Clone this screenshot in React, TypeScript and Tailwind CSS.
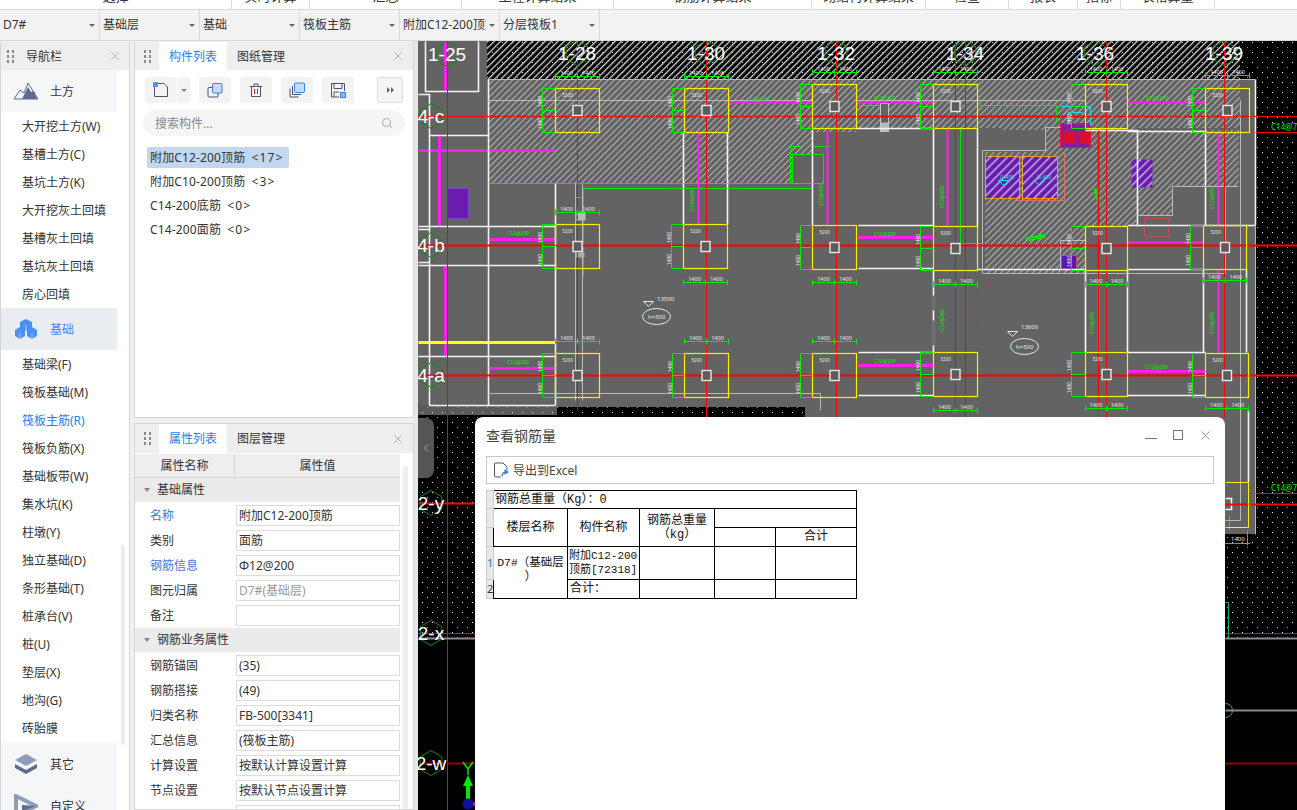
import { X, ChevronLeft, Search } from 'lucide-react';

const FONT = '[font-family:"Noto_Sans","Noto_Sans_CJK_SC",sans-serif]';

const topTabs = [
    { label: '选择', w: 'w-[232px]' },
    { label: '实时计算', w: 'w-[78px]' },
    { label: '汇总', w: 'w-[152px]' },
    { label: '工程计算结果', w: 'w-[152px]' },
    { label: '钢筋计算结果', w: 'w-[198px]' },
    { label: '砌结构计算结果', w: 'w-[114px]' },
    { label: '检查', w: 'w-[83px]' },
    { label: '报表', w: 'w-[69px]' },
    { label: '指标', w: 'w-[43px]' },
    { label: '表格算量', w: 'w-[94px]' },
];

const selectors = ['D7#', '基础层', '基础', '筏板主筋', '附加C12-200顶筋', '分层筏板1'];

const earthItems = ['大开挖土方(W)', '基槽土方(C)', '基坑土方(K)', '大开挖灰土回填', '基槽灰土回填', '基坑灰土回填', '房心回填'];
const baseItems = ['基础梁(F)', '筏板基础(M)', '筏板主筋(R)', '筏板负筋(X)', '基础板带(W)', '集水坑(K)', '柱墩(Y)', '独立基础(D)', '条形基础(T)', '桩承台(V)', '桩(U)', '垫层(X)', '地沟(G)', '砖胎膜'];

const components = [
    { label: '附加C12-200顶筋', count: '<17>', active: true },
    { label: '附加C10-200顶筋', count: '<3>' },
    { label: 'C14-200底筋', count: '<0>' },
    { label: 'C14-200面筋', count: '<0>' },
];

const baseProps = [
    { name: '名称', value: '附加C12-200顶筋', blue: true },
    { name: '类别', value: '面筋' },
    { name: '钢筋信息', value: 'Φ12@200', blue: true },
    { name: '图元归属', value: 'D7#(基础层)', muted: true },
    { name: '备注', value: '' },
];
const rebarProps = [
    { name: '钢筋锚固', value: '(35)' },
    { name: '钢筋搭接', value: '(49)' },
    { name: '归类名称', value: 'FB-500[3341]' },
    { name: '汇总信息', value: '(筏板主筋)' },
    { name: '计算设置', value: '按默认计算设置计算' },
    { name: '节点设置', value: '按默认节点设置计算' },
    { name: '搭接设置', value: '按默认搭接设置计算' },
];

// 桩承台: x, y, w, 标注线 y, 左侧标注线 x
const caps = [
    [555, 88, 44, 76, 542], [684, 88, 44, 76, 672], [812, 84, 44, 72, 800], [933, 84, 44, 72, 920], [1085, 84, 42, 72, 1071], [1205, 88, 44, 75, 1192],
    [555, 224, 44, 212, 542], [683, 224, 44, 282, 671], [812, 225, 44, 282, 800], [933, 226, 44, 284, 920], [1085, 226, 42, 284, 1071], [1203, 225, 43, 280, 1190],
    [555, 353, 44, 341, 542], [684, 353, 44, 341, 672], [812, 353, 44, 341, 800], [933, 352, 44, 410, 920], [1085, 352, 42, 408, 1071], [1205, 353, 43, 408, 1192],
];

const whiteLines = [
    'M425 41V91H478V41', 'M429 135V405', 'M429 135H488', 'M488 79V405', 'M555 183V405', 'M418 226H555', 'M418 265H555', 'M418 356H555', 'M429 405H555',
    'M418 94H429V135', 'M418 229H429', 'M418 262H429', 'M683 132V224', 'M727 132V224', 'M812 130V225', 'M933 128V226', 'M977 128V226', 'M856 128H933',
    'M858 225H933', 'M858 268H933', 'M858 352H933', 'M858 395H933', 'M933 270V352', 'M1085 268V352', 'M1127 268V352', 'M1085 130H1137V226',
    'M1127 225H1255', 'M1255 79V225', 'M977 269H1085', 'M1127 352H1205', 'M1127 395H1205', 'M1203 268V352', 'M1246 268V352', 'M1127 131H1205', 'M1205 131V225',
    'M1127 269H1203', 'M1248 410V482', 'M1225 498H1231V509H1225',
];
const grayLines = [
    'M488 79H1255', 'M488 100H812', 'M575 183V400', 'M582 183V400', 'M488 393H820V410', 'M982 273V150H1045V127H1060', 'M982 273H1225', 'M1238 186H1172V215H1137',
    'M1255 225V534', 'M1240 100V520H1225', 'M1225 186V273', 'M856 100H1085', 'M1060 240H1085', 'M1060 240V270',
];
const greenLines = [
    'M488 183H790V146H800', 'M583 188H812V146H830', 'M575 197V276', 'M583 188V276', 'M575 197H583', 'M977 105H1056V122', 'M960 128V243H982', 'M858 105H880',
    'M1229 515V530', 'M1225 543H1250M1247 530V545',
];
const magentaBars = [
    ['M445 41V91', 3], ['M418 150H555', 2.5], ['M439 135V226', 3], ['M445 265V356', 3], ['M488 239H555', 3], ['M488 368H555', 3], ['M698 132V224', 2], ['M827 130V224', 2],
    ['M728 102H812', 2], ['M858 102H933', 2], ['M1127 102H1205', 2], ['M858 237H933', 3], ['M858 365H933', 3], ['M947 128V226', 2], ['M1218 131V225', 2], ['M1218 268V352', 2],
    ['M1098 268V352', 3], ['M1127 371H1205', 3], ['M1127 242H1203', 2],
] as const;
const redLines = [
    ['M447 41V810', 1], ['M706 41V417', 1], ['M836 41V417', 1], ['M955 41V417', 1], ['M965 41V417', 1], ['M1106 41V417', 1], ['M1098 130V410', 1.5], ['M1224 41V417', 1],
    ['M577 225V410', 1], ['M418 116H488', 1], ['M812 116H1085', 2], ['M1255 116H1297', 1], ['M418 245H1297', 2], ['M418 375H1297', 2], ['M1255 132H1297', 1], ['M1255 493H1297', 1],
    ['M1225 504H1297', 2], ['M418 503H475', 2], ['M418 633H475', 1], ['M1225 633H1297', 1],
] as const;
const rebarLabels = [
    [694, 200], [823, 195], [944, 197], [1094, 323], [1214, 198], [1214, 323], [944, 320],
];
const gridLabels = [
    { t: '1-25', x: 447, y: 54 }, { t: '1-28', x: 577, y: 53 }, { t: '1-30', x: 706, y: 53 }, { t: '1-32', x: 836, y: 53 },
    { t: '1-34', x: 965, y: 53 }, { t: '1-36', x: 1095, y: 53 }, { t: '1-39', x: 1224, y: 53 },
    { t: '4-c', x: 431, y: 116 }, { t: '4-b', x: 431, y: 245 }, { t: '4-a', x: 431, y: 375 },
    { t: '2-y', x: 431, y: 503 }, { t: '2-x', x: 431, y: 633 }, { t: '2-w', x: 431, y: 763 },
];

function hexPoints(cx: number, cy: number, r: number) {
    return [0, 1, 2, 3, 4, 5].map((i) => {
        const a = (Math.PI / 3) * i + Math.PI / 6;
        return `${cx + r * Math.cos(a)},${cy + r * Math.sin(a)}`;
    }).join(' ');
}

function Cap({ x, y, w, dimY, dimX }: { x: number; y: number; w: number; dimY: number; dimX: number }) {
    const mid = x + w / 2;
    const midY = y + 22;
    return (
        <g>
            <rect x={x} y={y} width={w} height={44} fill="none" stroke="#ffee00" strokeWidth="1.2" />
            <rect x={mid - 4.5} y={midY - 5} width={9} height={10} fill="#5c5c5c" stroke="#e8e8e8" strokeWidth="1.4" />
            <path d={`M${x} ${dimY}H${x + w}M${x} ${dimY - 3}V${dimY + 3}M${mid} ${dimY - 3}V${dimY + 3}M${x + w} ${dimY - 3}V${dimY + 3}`} stroke="#00e800" strokeWidth="1" fill="none" />
            <path d={`M${dimX} ${y}V${y + 44}M${dimX} ${y}H${x}M${dimX} ${midY}H${x}M${dimX} ${y + 44}H${x}`} stroke="#00e800" strokeWidth="1" fill="none" />
            <text x={x + w / 4} y={dimY - 2} fontSize="5.5" fill="#e8e8e8" textAnchor="middle">1400</text>
            <text x={x + (3 * w) / 4} y={dimY - 2} fontSize="5.5" fill="#e8e8e8" textAnchor="middle">1400</text>
            <text x={x + 7} y={y + 8} fontSize="4.5" fill="#e8e8e8">5200</text>
            <text fontSize="5" fill="#e8e8e8" textAnchor="middle" transform={`translate(${dimX - 1} ${y + 13}) rotate(-90)`}>1400</text>
            <text fontSize="5" fill="#e8e8e8" textAnchor="middle" transform={`translate(${dimX - 1} ${y + 35}) rotate(-90)`}>1400</text>
        </g>
    );
}

function CadDrawing() {
    return (
        <svg viewBox="418 41 879 769" className="block w-[879px] h-[769px]">
            <defs>
                <pattern id="dots" width="10" height="10" patternUnits="userSpaceOnUse">
                    <rect x="2" y="2" width="1" height="1" fill="#f0f0f0" />
                    <rect x="7" y="7" width="1" height="1" fill="#999" />
                </pattern>
                <pattern id="hatchTop" width="4.5" height="4.5" patternUnits="userSpaceOnUse" patternTransform="rotate(45)">
                    <rect width="1.3" height="4.5" fill="#d0d0d0" />
                </pattern>
                <pattern id="hatchGray" width="4.5" height="4.5" patternUnits="userSpaceOnUse" patternTransform="rotate(45)">
                    <rect width="1" height="4.5" fill="#b4b4b4" />
                </pattern>
                <pattern id="hatchPurple" width="6" height="6" patternUnits="userSpaceOnUse" patternTransform="rotate(45)">
                    <rect width="1.4" height="6" fill="#c8b8e0" />
                </pattern>
            </defs>

            <rect x="418" y="41" width="879" height="769" fill="#000" />
            <rect x="418" y="41" width="879" height="597" fill="url(#dots)" />
            <path d="M418 41H487V79H1255V534H805V407H557V405H418Z" fill="#636363" />
            <rect x="418" y="405" width="139" height="10" fill="#5a5a5a" />
            <rect x="418" y="405" width="139" height="10" fill="url(#dots)" />
            <rect x="487" y="41" width="753" height="38" fill="url(#hatchTop)" />

            {/* 填充区域 */}
            <path d="M488 79H1240V128H1137V226H1085V130H1000V128H856V132H812V183H488Z" fill="url(#hatchGray)" />
            <path d="M985 152H1045V130H1085V273H985Z" fill="url(#hatchGray)" />
            <path d="M1137 130H1239V186H1172V215H1137Z" fill="url(#hatchGray)" />

            <g transform="translate(0.5 0.5)">
                <path d={greenLines.join('')} stroke="#00e800" fill="none" />
                <rect x="792" y="154" width="31" height="29" fill="#636363" stroke="#00e800" />
                <rect x="576" y="211" width="9" height="9" fill="#bbbbbb" />
                <rect x="575" y="252" width="9" height="5" fill="#aaaaaa" />
                <rect x="880" y="103" width="8" height="28" fill="#636363" stroke="#c8c8c8" />
                <rect x="880" y="122" width="8" height="9" fill="#bbbbbb" />

                {/* 紫色区块 */}
                <rect x="447" y="188" width="21" height="30" fill="#6a1cb0" stroke="#7a4ac0" />
                <rect x="985" y="156" width="34" height="42" fill="#6a1cb0" />
                <rect x="985" y="156" width="34" height="42" fill="url(#hatchPurple)" stroke="#f0a020" />
                <rect x="1022" y="156" width="35" height="42" fill="#6a1cb0" />
                <rect x="1022" y="156" width="35" height="42" fill="url(#hatchPurple)" stroke="#f0a020" />
                <rect x="1131" y="159" width="21" height="28" fill="#6a1cb0" />
                <rect x="1131" y="159" width="21" height="28" fill="url(#hatchPurple)" />
                <rect x="1060" y="123" width="30" height="24" fill="#8a1ca0" stroke="#f01030" />
                <rect x="1062" y="131" width="13" height="12" fill="#d81030" />
                <rect x="1078" y="131" width="11" height="12" fill="#d81030" />
                <rect x="1061" y="255" width="15" height="14" fill="#5a18b0" stroke="#c05050" />
                <path d="M1060 106H1090V125M1068 112H1082M1068 112V122" stroke="#20e0e0" fill="none" />
                <path d="M998 180l5 5 5-5zM1034 180l5 5 5-5" stroke="#20e0e0" fill="none" />
                <path d="M1064 150V200H1015" stroke="#e07060" fill="none" />
                <rect x="1144" y="218" width="24" height="18" fill="none" stroke="#c05050" />
                <path d="M1094 188L1099 207M1096 188L1099 200M1025 238L1045 234M1028 240L1045 236" stroke="#00e800" strokeWidth="2" fill="none" />

                {magentaBars.map(([d, w]) => <path key={d} d={d} stroke="#ff20f0" strokeWidth={w} fill="none" />)}
                <path d="M418 342H555" stroke="#ffff20" strokeWidth="3" />

                <path d={whiteLines.join('')} stroke="#f4f4f4" strokeWidth="1.6" fill="none" />
                <path d={grayLines.join('')} stroke="#b8b8b8" strokeWidth="1" fill="none" />
                <path d="M933 295V310M933 320V345M977 285V300M977 315V330" stroke="#636363" strokeWidth="2" fill="none" />

                {redLines.map(([d, w]) => <path key={d} d={d} stroke="#ff0000" strokeWidth={w} fill="none" />)}
                <path d="M577 41V225" stroke="#ff0000" strokeDasharray="10 2" fill="none" />
                <path d="M488 116H812M1085 116H1255" stroke="#ff0000" strokeWidth="1.5" strokeDasharray="12 2" fill="none" />
                <path d="M418 763H475M1225 763H1297" stroke="#8a0808" strokeWidth="2" />
                <path d="M1225 638H1297M418 638H475M1225 710H1297" stroke="#8a8a8a" strokeWidth="2" />
                <path d="M1225 602H1228V638" stroke="#14b070" fill="none" />
                <path d="M1225 703a7 7 0 0 1 0 14" stroke="#40a090" fill="none" />
                <path d="M1225 482H1248V527H1225" stroke="#ffee00" fill="none" />

                {caps.map(([x, y, w, dimY, dimX]) => <Cap key={`${x}-${y}`} x={x} y={y} w={w} dimY={dimY} dimX={dimX} />)}

                {/* 板厚标注 */}
                <g fill="none" stroke="#e8e8e8">
                    <path d="M643 301H653L648 306Z" />
                    <ellipse cx="656" cy="316" rx="14" ry="8" />
                    <path d="M1007 331H1017L1012 336Z" />
                    <ellipse cx="1024" cy="346" rx="14" ry="8" />
                </g>
            </g>

            {/* 配筋文字 */}
            <g fill="#00f000" fontSize="5">
                <text x="507" y="235">C12@200</text>
                <text x="507" y="364">C12@200</text>
                <text x="747" y="101">C12@200</text>
                <text x="874" y="100">C12@200</text>
                <text x="874" y="236">C12@200</text>
                <text x="874" y="363">C12@200</text>
                <text x="1146" y="100">C12@200</text>
                <text x="1146" y="369">C12@200</text>
                <text x="1271" y="130" fontSize="8">C14@750</text>
                <text x="1271" y="491" fontSize="8">C14@750</text>
                {rebarLabels.map(([x, y]) => (
                    <text key={`${x}-${y}`} textAnchor="middle" transform={`translate(${x} ${y}) rotate(-90)`}>C12@200</text>
                ))}
            </g>
            <g fill="#20e0e0" fontSize="5">
                <text x="1000" y="179">J2.400</text>
                <text x="1037" y="179">J2.400</text>
            </g>
            <g fill="#e8e8e8" fontSize="6">
                <text x="648" y="319">h=500</text>
                <text x="1016" y="349">h=500</text>
                <text x="657" y="301">13500</text>
                <text x="1021" y="329">13600</text>
                <text x="1231" y="541">1400</text>
            </g>

            {gridLabels.map((g) => (
                <g key={g.t}>
                    <polygon points={hexPoints(g.x, g.y, 12.5)} fill="none" stroke="#0f8a0f" strokeWidth="1" />
                    <text x={g.x} y={g.y + 7} fontSize="19" fill="#ffffff" textAnchor="middle" className="[font-family:'Liberation_Sans',sans-serif]">{g.t}</text>
                </g>
            ))}

            {/* 坐标轴 */}
            <path d="M468 800V785" stroke="#00e800" strokeWidth="4" />
            <path d="M463 786L468 775L473 786Z" fill="#00e800" />
            <path d="M463 762L468 769L473 762M468 769V775" stroke="#00e800" strokeWidth="1.5" fill="none" />
            <circle cx="468" cy="804" r="5.5" fill="#10109a" />
            <rect x="473" y="802" width="2" height="4" fill="#c01060" />
        </svg>
    );
}

function Grip() {
    return (
        <div className="grid grid-cols-2 gap-x-[3px] gap-y-[2px] w-[7px]">
            {[0, 1, 2, 3, 4, 5].map((i) => <span key={i} className="w-[2px] h-[3px] bg-[#8a8a8a]" />)}
        </div>
    );
}

function TabHeader({ first, second, height }: { first: string; second: string; height: string }) {
    return (
        <div className={`${height} bg-[#eeeeef] flex items-center shrink-0`}>
            <div className="w-[24px] flex justify-center pl-[1px]"><Grip /></div>
            <div className="w-[68px] h-full bg-white flex items-center justify-center pt-[1px] text-[#1f7fe8]">{first}</div>
            <div className="ml-[10px] pt-[1px] text-[#333]">{second}</div>
            <X className="ml-auto mr-[8px] w-[14px] h-[14px] text-[#a8a8a8]" strokeWidth={1.4} />
        </div>
    );
}

function NavHeader({ label, active, bg, children }: { label: string; active?: boolean; bg: string; children: React.ReactNode }) {
    return (
        <div className={`w-[116px] h-[42px] flex items-center ${bg}`}>
            <div className="w-[49px] flex justify-center">{children}</div>
            <span className={`pt-[1px] ${active ? 'text-[#4a86e8]' : 'text-[#333]'}`}>{label}</span>
        </div>
    );
}

function NavItem({ label, active }: { label: string; active?: boolean }) {
    return <div className={`h-[28px] pl-[21px] flex items-center whitespace-nowrap ${active ? 'text-[#1f7fe8]' : 'text-[#333]'}`}>{label}</div>;
}

function Sidebar() {
    return (
        <div className="relative mt-[1px] w-[130px] shrink-0 bg-white border-l border-r border-[#d6d6d6] overflow-hidden">
            <div className="h-[28px] bg-[#eeeeef] flex items-center pl-[6px] pr-[7px]">
                <Grip />
                <span className="ml-[12px] pt-[1px] text-[#333]">导航栏</span>
                <X className="ml-auto w-[14px] h-[14px] text-[#a8a8a8]" strokeWidth={1.4} />
            </div>
            <NavHeader label="土方" bg="bg-[#f5f6f8]">
                <svg width="26" height="18" viewBox="0 0 26 18">
                    <path d="M1 17L7 8L11 11L15 1L25 17Z" fill="none" stroke="#5b6b8c" strokeWidth="1" />
                    <path d="M9 17L15 5L18 10L21 9L24 17Z" fill="#5b6b8c" />
                </svg>
            </NavHeader>
            <div className="relative top-[1px] h-[196px]">
                {earthItems.map((l) => <NavItem key={l} label={l} />)}
            </div>
            <NavHeader label="基础" active bg="bg-[#e9ecf1]">
                <svg width="24" height="22" viewBox="0 0 24 22">
                    <path d="M12 1L18 4V10L12 13L6 10V4Z" fill="#4a90f0" />
                    <path d="M6 9L11 12V18L6 21L1 18V12Z" fill="#4a90f0" />
                    <path d="M18 9L23 12V18L18 21L13 18V12Z" fill="#4a90f0" />
                    <path d="M6 15V21M18 15V21M12 7V13" stroke="#a8ccf8" strokeWidth="1" />
                </svg>
            </NavHeader>
            <div className="pt-[1px]">
                {baseItems.map((l) => <NavItem key={l} label={l} active={l === '筏板主筋(R)'} />)}
            </div>
            <NavHeader label="其它" bg="bg-[#f5f6f8]">
                <svg width="24" height="22" viewBox="0 0 24 22">
                    <path d="M12 1L23 7L12 13L1 7Z" fill="#8f9db8" />
                    <path d="M1 11L12 17L23 11V15L12 21L1 15Z" fill="#5b6b8c" />
                </svg>
            </NavHeader>
            <NavHeader label="自定义" bg="bg-[#f5f6f8]">
                <svg width="24" height="24" viewBox="0 0 24 24">
                    <path d="M2 2L22 12L2 22Z" fill="none" stroke="#8f9db8" strokeWidth="4" />
                    <path d="M8 11L22 12L8 17Z" fill="#5b6b8c" />
                </svg>
            </NavHeader>
            <div className="absolute left-[120px] top-[503px] w-[4px] h-[200px] rounded bg-[#ececec]" />
        </div>
    );
}

function ToolBtn({ children, w = 'w-[32px]' }: { children: React.ReactNode; w?: string }) {
    return <div className={`${w} h-[26px] rounded-[3px] bg-[#f3f3f3] flex items-center justify-center`}>{children}</div>;
}

function ComponentList() {
    return (
        <div className="h-[376px] bg-white border border-[#d6d6d6] border-t-0 flex flex-col shrink-0">
            <TabHeader first="构件列表" second="图纸管理" height="h-[28px]" />
            <div className="flex items-center h-[26px] mt-[7px] pl-[10px]">
                <ToolBtn>
                    <svg width="16" height="16" viewBox="0 0 16 16" fill="none">
                        <path d="M1.500 5V14.500H14.500V5L11 1.500H5" stroke="#4a5570" />
                        <rect x="0" y="0" width="5" height="5" fill="#5a90e0" />
                    </svg>
                </ToolBtn>
                <div className="ml-[1px] w-[12px] h-[26px] bg-[#f3f3f3] rounded-r-[3px] flex items-center justify-center">
                    <span className="border-x-[3px] border-x-transparent border-t-[3px] border-t-[#888]" />
                </div>
                <div className="ml-[9px]"><ToolBtn>
                    <svg width="16" height="16" viewBox="0 0 16 16" fill="none">
                        <rect x="5.500" y="1.500" width="9.500" height="9.500" rx="1" fill="#c6dcf8" stroke="#3a7fe0" />
                        <path d="M5 5.500H2A1 1 0 0 0 1 6.500V14A1 1 0 0 0 2 15H10A1 1 0 0 0 11 14V11" stroke="#4a5570" />
                    </svg>
                </ToolBtn></div>
                <div className="ml-[9px]"><ToolBtn>
                    <svg width="16" height="16" viewBox="0 0 16 16" fill="none">
                        <path d="M2 4.500H14M3.500 4.500V14.500H12.500V4.500M6 4.500V2H10V4.500" stroke="#4a5570" />
                        <path d="M6.500 7V12M9.500 7V12" stroke="#e02020" />
                    </svg>
                </ToolBtn></div>
                <div className="ml-[9px]"><ToolBtn>
                    <svg width="16" height="16" viewBox="0 0 16 16" fill="none">
                        <rect x="5.500" y="1" width="10" height="9.500" rx="1" fill="#c6dcf8" stroke="#3a7fe0" />
                        <path d="M3.500 4V12.500H12M1 6.500V15H9.500" stroke="#4a5570" />
                    </svg>
                </ToolBtn></div>
                <div className="ml-[9px]"><ToolBtn>
                    <svg width="16" height="16" viewBox="0 0 16 16" fill="none">
                        <path d="M9 15H1.500V1.500H14.500V9M4 1.500V6.500H12V1.500M4 15V10H9" stroke="#4a5570" />
                        <rect x="10.500" y="10.500" width="5" height="5" fill="#8ab8f0" stroke="#3a7fe0" />
                    </svg>
                </ToolBtn></div>
                <div className="ml-[23px] w-[26px] h-[26px] rounded-[3px] bg-[#f5f5f5] border border-[#dcdcdc] flex items-center justify-center gap-[1px]">
                    <span className="border-y-[3px] border-y-transparent border-l-[3px] border-l-[#666]" />
                    <span className="border-y-[3px] border-y-transparent border-l-[3px] border-l-[#666]" />
                </div>
            </div>
            <div className="mt-[7px] mx-[8px] h-[26px] rounded-full bg-[#f5f5f5] flex items-center pl-[12px] pr-[12px] text-[#8a8a8a]">
                <span className="pt-[1px]">搜索构件...</span>
                <Search className="ml-auto w-[12px] h-[12px] text-[#a8a8a8]" strokeWidth={2} />
            </div>
            <div className="mt-[11px] pl-[12px] flex flex-col gap-[3px] items-start">
                {components.map((c) => (
                    <div key={c.label} className={`h-[21px] pl-[3px] pr-[5px] flex items-center rounded-[2px] text-[#333] ${c.active ? 'bg-[#c1d8f0]' : ''}`}>
                        <span className="tracking-[0.15px]">{c.label}</span>
                        <span className="ml-[6px] tracking-[1.2px]">{c.count}</span>
                    </div>
                ))}
            </div>
        </div>
    );
}

function PropRow({ name, value, blue, muted }: { name: string; value: string; blue?: boolean; muted?: boolean }) {
    return (
        <div className="h-[25px] flex items-center shrink-0">
            <div className={`w-[101px] pl-[15px] ${blue ? 'text-[#3c78dc]' : 'text-[#333]'}`}>{name}</div>
            <div className={`w-[164px] h-[21px] border border-[#dcdcdc] flex items-center pl-[2px] whitespace-nowrap ${muted ? 'text-[#9a9a9a]' : 'text-[#333]'}`}>{value}</div>
        </div>
    );
}

function PropGroup({ label }: { label: string }) {
    return (
        <div className="h-[24px] bg-[#ebebeb] flex items-center pl-[9px] text-[#333] shrink-0">
            <span className="border-x-[3px] border-x-transparent border-t-[4px] border-t-[#888]" />
            <span className="ml-[7px]">{label}</span>
        </div>
    );
}

function PropertyPanel() {
    return (
        <div className="relative mt-[5px] flex-1 bg-white border border-[#d6d6d6] flex flex-col overflow-hidden">
            <TabHeader first="属性列表" second="图层管理" height="h-[29px]" />
            <div className="w-[265px] h-[24px] mt-[1px] bg-[#eeeeef] flex border-b border-[#d6d6d6] text-[#333] shrink-0">
                <div className="w-[100px] flex items-center justify-center border-r border-[#d6d6d6]">属性名称</div>
                <div className="flex-1 flex items-center justify-center">属性值</div>
            </div>
            <div className="w-[265px] flex flex-col">
                <PropGroup label="基础属性" />
                <div className="h-[1px] shrink-0" />
                {baseProps.map((p) => <PropRow key={p.name} {...p} />)}
                <PropGroup label="钢筋业务属性" />
                <div className="h-[1px] shrink-0" />
                {rebarProps.map((p) => <PropRow key={p.name} {...p} />)}
            </div>
            <div className="absolute left-[268px] top-[42px] bottom-0 w-[5px] rounded-t bg-[#eeeeee]" />
        </div>
    );
}

const tdClass = 'border border-black p-0 text-center align-middle';

function SteelTable() {
    return (
        <table className='mt-[6px] ml-[11px] table-fixed border-collapse w-[370px] text-[12px] leading-[14px] text-[#111] [font-family:"Liberation_Mono","Noto_Sans_CJK_SC",monospace]'>
            <colgroup>
                <col className="w-[7px]" /><col className="w-[74px]" /><col className="w-[72px]" /><col className="w-[75px]" /><col className="w-[61px]" /><col className="w-[81px]" />
            </colgroup>
            <tbody>
                <tr className="h-[18px]">
                    <td className="bg-[#e8e8e8] border border-[#cccccc]" />
                    <td colSpan={5} className="border border-black pl-[1px] text-left whitespace-nowrap">钢筋总重量（Kg）：0</td>
                </tr>
                <tr className="h-[19px]">
                    <td className="bg-[#e8e8e8] border border-[#cccccc]" />
                    <td rowSpan={2} className={tdClass}>楼层名称</td>
                    <td rowSpan={2} className={tdClass}>构件名称</td>
                    <td rowSpan={2} className={tdClass}>钢筋总重量<br />（kg）</td>
                    <td colSpan={2} className={tdClass} />
                </tr>
                <tr className="h-[19px]">
                    <td className="bg-[#e8e8e8] border border-[#cccccc]" />
                    <td className={tdClass} />
                    <td className={tdClass}>合计</td>
                </tr>
                <tr className="h-[33px]">
                    <td className="bg-[#e8e8e8] border border-[#cccccc] text-[#2a6fd0] text-[11px] overflow-hidden [font-family:'Noto_Sans',sans-serif]">1</td>
                    <td rowSpan={2} className="border border-black p-0 text-center align-top pt-[9px] text-[11.5px] whitespace-nowrap">D7#（基础层<br />）</td>
                    <td className="border border-black pl-[1px] text-left text-[11px] leading-[14px]">附加C12-200<br />顶筋[72318]</td>
                    <td className={tdClass} /><td className={tdClass} /><td className={tdClass} />
                </tr>
                <tr className="h-[19px]">
                    <td className="bg-[#e8e8e8] border border-[#cccccc] text-[#333] text-[11px] overflow-hidden [font-family:'Noto_Sans',sans-serif]">2</td>
                    <td className="border border-black pl-[2px] text-left">合计：</td>
                    <td className={tdClass} /><td className={tdClass} /><td className={tdClass} />
                </tr>
            </tbody>
        </table>
    );
}

function SteelDialog() {
    return (
        <div className="absolute left-[57px] top-[376px] w-[750px] h-[393px] bg-white rounded-t-[8px] flex flex-col">
            <div className="h-[39px] pb-[3px] flex items-center pl-[11px] pr-[12px] text-[#444] text-[14px]">
                <span>查看钢筋量</span>
                <span className="ml-auto w-[12px] h-[1px] bg-[#777] mt-[7px]" />
                <span className="ml-[16px] w-[10px] h-[10px] border border-[#777]" />
                <X className="ml-[15px] w-[15px] h-[15px] text-[#777]" strokeWidth={1.2} />
            </div>
            <div className="mx-[11px] h-[28px] border border-[#c8c8c8] flex items-center pl-[6px] text-[12px] text-[#444]">
                <svg width="16" height="16" viewBox="0 0 16 16" fill="none">
                    <path d="M8 15H2.500A1 1 0 0 1 1.500 14V2A1 1 0 0 1 2.500 1H10L14 5V8" stroke="#4a5570" />
                    <path d="M9 14C9.500 11 11 10 13 10M11.500 8L14.500 10L11.500 12" stroke="#3a7fe0" strokeWidth="1.6" />
                </svg>
                <span className="ml-[4px] pt-[2px]">导出到Excel</span>
            </div>
            <SteelTable />
        </div>
    );
}

export default function App() {
    return (
        <div className={`w-[1297px] h-[810px] overflow-hidden flex flex-col bg-[#f0f0f0] text-[12px] ${FONT}`}>
            {/* 顶部菜单被裁切的部分 */}
            <div className="h-[9px] bg-white flex overflow-hidden shrink-0 text-[13px] leading-[14px] text-[#333]">
                {topTabs.map((t) => (
                    <div key={t.label} className={`${t.w} h-[9px] border-r border-[#dcdcdc] flex justify-center whitespace-nowrap`}>
                        <span className="-mt-[11px]">{t.label}</span>
                    </div>
                ))}
            </div>
            <div className="h-[32px] flex border-t border-b border-[#d8d8d8] bg-[#f2f2f2] shrink-0 text-[#333]">
                {selectors.map((s) => (
                    <div key={s} className="w-[100px] pl-[3px] pr-[4px] flex items-center border-r border-[#d8d8d8]">
                        <span className="overflow-hidden whitespace-nowrap flex-1">{s}</span>
                        <span className="ml-[3px] border-x-[3px] border-x-transparent border-t-[3px] border-t-[#666]" />
                    </div>
                ))}
            </div>
            <div className="flex-1 flex min-h-0">
                <Sidebar />
                <div className="ml-[4px] pt-[1px] w-[280px] shrink-0 flex flex-col">
                    <ComponentList />
                    <PropertyPanel />
                </div>
                <div className="w-[4px] bg-[#e6e6e6] shrink-0" />
                <div className="relative flex-1 overflow-hidden">
                    <CadDrawing />
                    <div className="absolute left-0 top-[377px] w-[16px] h-[60px] bg-[#555] rounded-r-[8px] flex items-center justify-center">
                        <ChevronLeft className="w-[12px] h-[12px] text-[#aaa]" />
                    </div>
                    <SteelDialog />
                </div>
            </div>
        </div>
    );
}
